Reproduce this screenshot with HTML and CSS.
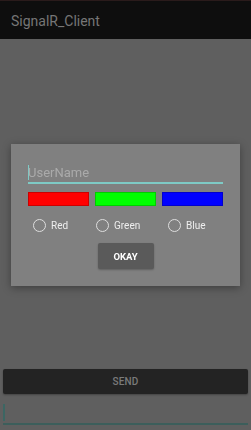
FILE: index.html
```html
<!DOCTYPE html>
<html>
<head>
<meta charset="utf-8">
<link rel="stylesheet" href="styles.css">
</head>
<body>
<div class="screen">
  <header class="appbar"><span class="title">SignalR_Client</span></header>
  <main class="content"></main>
  <button class="send-btn">SEND</button>
  <div class="message-input"><span class="cursor dark"></span></div>
</div>

<div class="overlay">
  <div class="dialog">
    <div class="username"><span class="cursor"></span><span class="hint">UserName</span></div>
    <div class="swatches">
      <div class="swatch red"></div>
      <div class="swatch green"></div>
      <div class="swatch blue"></div>
    </div>
    <div class="radios">
      <label class="radio"><span class="circle"></span><span class="label">Red</span></label>
      <label class="radio"><span class="circle"></span><span class="label">Green</span></label>
      <label class="radio"><span class="circle"></span><span class="label">Blue</span></label>
    </div>
    <div class="actions"><button class="okay-btn">OKAY</button></div>
  </div>
</div>
</body>
</html>
```
FILE: styles.css
```css
* { box-sizing: border-box; }
html, body { margin: 0; padding: 0; }
body {
  width: 251px;
  height: 430px;
  overflow: hidden;
  background: #5f5f5f;
  font-family: Roboto, "Liberation Sans", sans-serif;
}
.screen {
  height: 430px;
  display: flex;
  flex-direction: column;
}
.appbar {
  height: 39px;
  flex: none;
  background: #0e0e0e;
  border-top: 1px solid #2a1b1b;
  padding: 1px 0 0 11px;
  line-height: 37px;
  overflow: hidden;
}
.title {
  font-size: 14px;
  color: #767676;
}
.content { flex: 1; }
.send-btn {
  margin: 0 3px 10px;
  height: 25px;
  border: none;
  border-radius: 2px;
  background: #232323;
  color: #7a7a7a;
  font-family: Roboto, "Liberation Sans", sans-serif;
  font-size: 10px;
  font-weight: 500;
  letter-spacing: 0.2px;
  box-shadow: 0 1px 2px rgba(0,0,0,0.3);
}
.message-input {
  margin: 0 3px 5px;
  height: 21px;
  border-bottom: 2px solid #3c5e5b;
}
.cursor {
  display: inline-block;
  width: 1px;
  height: 15px;
  background: #7ecac5;
  vertical-align: top;
}
.cursor.dark {
  width: 2px;
  height: 17px;
  background: #3c6663;
}
.overlay {
  position: fixed;
  inset: 0;
  display: flex;
  align-items: center;
  justify-content: center;
}
.dialog {
  width: 229px;
  height: 142px;
  background: #808080;
  box-shadow: 0 2px 8px rgba(0,0,0,0.35);
  padding: 20px 17px 17px;
}
.username {
  height: 20px;
  border-bottom: 2px solid #7ecac5;
  line-height: 16px;
  padding-top: 1px;
}
.hint {
  font-size: 13px;
  color: #aaaaaa;
  vertical-align: top;
  margin-left: -1px;
}
.swatches {
  display: flex;
  gap: 6px;
  margin-top: 8px;
}
.swatch {
  flex: 1;
  height: 14px;
  border: 1px solid rgba(0,0,0,0.2);
}
.red { background: #ff0000; }
.green { background: #00ff00; }
.blue { background: #0000ff; }
.radios {
  display: grid;
  grid-template-columns: 63px 72px 1fr;
  padding-left: 5px;
  margin-top: 12px;
  height: 14px;
}
.radio {
  display: flex;
  align-items: center;
  gap: 5px;
}
.circle {
  width: 13px;
  height: 13px;
  border: 1.5px solid #dedede;
  border-radius: 50%;
}
.label {
  font-size: 10px;
  color: #eeeeee;
}
.actions {
  display: flex;
  justify-content: center;
  margin-top: 11px;
}
.okay-btn {
  width: 56px;
  height: 26px;
  border: none;
  border-radius: 2px;
  background: #5a5a5a;
  color: #ffffff;
  font-family: Roboto, "Liberation Sans", sans-serif;
  font-size: 9.5px;
  font-weight: 700;
  box-shadow: 0 1px 2px rgba(0,0,0,0.25);
}
```
